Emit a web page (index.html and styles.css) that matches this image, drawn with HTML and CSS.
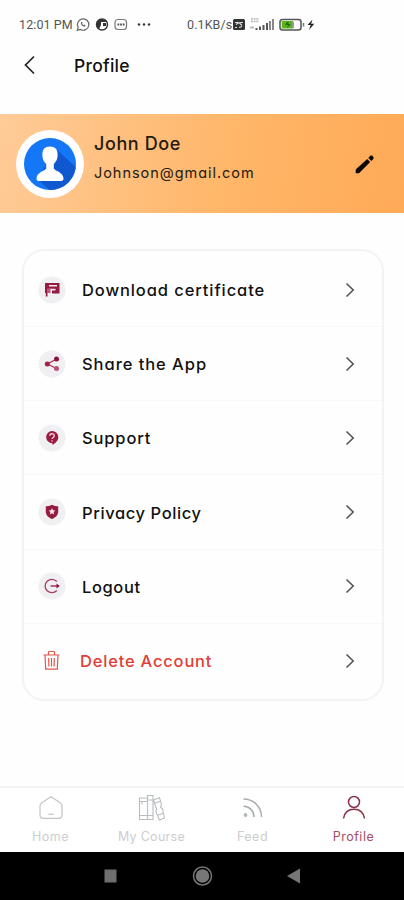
FILE: index.html
```
<!DOCTYPE html>
<html lang="en">
<head>
<meta charset="utf-8">
<title>Profile</title>
<link rel="stylesheet" href="styles.css">
</head>
<body>
<div class="screen">
  <div class="status">
    <span class="clock">12:01 PM</span>
    <svg class="status-left" width="78" height="16" viewBox="0 0 78 16" fill="none">
      <path d="M2.300 13.300l.9-3A5.700 5.700 0 1 1 5.400 12.500z" stroke="#666" stroke-width="1.200"/>
      <path d="M6 5.300c-.6 2.200 1.800 4.800 4.200 4.200l.4-1.200-1.500-.7-.7.6-1.300-1.400.5-.8-.6-1.200z" fill="#666"/>
      <circle cx="27" cy="7.500" r="5.500" stroke="#333" stroke-width="1.400"/>
      <path d="M27 2a5.500 5.500 0 0 0-3 10l2-4V5h5V3.500zM28 6h3v3h-3z" fill="#333"/>
      <rect x="40" y="2.500" width="11.500" height="10" rx="3" stroke="#777" stroke-width="1.200"/>
      <path d="M42.500 7.500h7" stroke="#555" stroke-width="1.800" stroke-dasharray="1.800 .8"/>
      <g fill="#333"><circle cx="64" cy="7.500" r="1.200"/><circle cx="69" cy="7.500" r="1.200"/><circle cx="74" cy="7.500" r="1.200"/></g>
    </svg>
    <span class="speed">0.1KB/s</span>
    <svg class="status-right" width="84" height="16" viewBox="0 0 84 16">
      <rect x="1" y="2" width="12" height="11" rx="1.500" fill="#333"/>
      <path d="M3 5.500h3M8 5.500h3M4 7.500l3-2 3 3M3 10.500h2M7 10.500l3-1" stroke="#ddd" stroke-width="1.100" fill="none"/>
      <path d="M19 2h8M19 4.500h8" stroke="#bbb" stroke-width="1.600" stroke-dasharray="2 .6"/>
      <path d="M18 10.500h4" stroke="#bbb" stroke-width="2"/>
      <path d="M24.500 13v-2M28 13V9.500M31.500 13V8M35 13V6" stroke="#555" stroke-width="2"/>
      <path d="M38 13V4M41 13V2" stroke="#888" stroke-width="2"/>
      <rect x="48" y="2.500" width="21" height="10.500" rx="2.500" fill="#fff" stroke="#555" stroke-width="1.500"/>
      <rect x="49.700" y="4" width="11.500" height="7.500" fill="#59b51e"/>
      <path d="M55 5l-2 3h3l-1 3 4-4h-3l1-2z" fill="#286e10"/>
      <path d="M61 5v6" stroke="#999" stroke-width="2"/>
      <path d="M71.500 6v3.500" stroke="#777" stroke-width="1.500"/>
      <path d="M80.500 2.500l-5 5.500h3.200l-1.700 5 5.300-6.200h-3.200z" fill="#222"/>
    </svg>
  </div>

  <header class="topbar">
    <svg class="back" width="14" height="20" viewBox="0 0 14 20" fill="none" stroke="#222" stroke-width="1.700"><path d="M11 1.500L2.500 10l8.500 8.500"/></svg>
    <h1>Profile</h1>
  </header>

  <section class="banner">
    <div class="avatar">
      <svg width="52" height="52" viewBox="0 0 52 52">
        <defs><clipPath id="disc"><circle cx="26" cy="26" r="26"/></clipPath></defs>
        <g clip-path="url(#disc)">
          <rect width="52" height="52" fill="#1477f8"/>
          <path d="M31 10L54 31v23H28L14 42z" fill="#1058d0"/>
        </g>
        <path d="M26 8.500c-5 0-7.800 2.700-7.600 8.500.1 5 2 7 3.800 9v4.500c-1 2.500-9 3.300-9.700 9.500-.2 2 .8 3 2.500 3h22c1.700 0 2.700-1 2.500-3-.7-6.200-8.700-7-9.700-9.500V26c1.800-2 3.700-4 3.800-9 .2-5.800-2.600-8.500-7.600-8.500z" fill="#fff"/>
      </svg>
    </div>
    <div class="who">
      <div class="name">John Doe</div>
      <div class="email">Johnson@gmail.com</div>
    </div>
    <svg class="edit" width="20" height="20" viewBox="0 0 20 20"><path d="M.7 19.300v-3.700L12.200 5l3 3L4 19.300zM13.300 3.900l1.800-1.900c1.500-1.400 4.700 1.300 3.200 3l-1.900 1.900z" fill="#0b0805"/></svg>
  </section>

  <nav class="card">
    <div class="row">
      <svg class="icon" viewBox="0 0 28 28"><circle cx="14" cy="14" r="13.500" fill="#f0eff1"/><path d="M7 7h14.500v10.500H14v-3h3.500v-1.800H11V17H9.500v3.500H7.800V17H7zM11 9v1.500h8V9z" fill="#96193f" fill-rule="evenodd"/><path d="M9 12.500h3.500v4.500H9z" fill="#bd5879"/></svg>
      <span class="label l-download">Download certificate</span>
      <svg class="chevron" viewBox="0 0 10 16"><path d="M1.500 1.500L8.200 8l-6.700 6.500"/></svg>
    </div>
    <div class="row">
      <svg class="icon" viewBox="0 0 28 28"><circle cx="14" cy="14" r="13.500" fill="#f0eff1"/><path d="M18.500 9L9.500 14l9 4.500" fill="none" stroke="#a73259" stroke-width="1.300"/><circle cx="18.500" cy="9" r="2.500" fill="#8d1439"/><circle cx="9.300" cy="14" r="2.500" fill="#a31e49"/><circle cx="18.500" cy="18.600" r="2.500" fill="#bd4f74"/></svg>
      <span class="label l-share">Share the App</span>
      <svg class="chevron" viewBox="0 0 10 16"><path d="M1.500 1.500L8.200 8l-6.700 6.500"/></svg>
    </div>
    <div class="row">
      <svg class="icon" viewBox="0 0 28 28"><circle cx="14" cy="14" r="13.500" fill="#f0eff1"/><path d="M14 7a6.300 6.300 0 0 1 6.300 6.300c0 3.700-3 6-5.800 7.700v-1.800A6 6 0 1 1 14 7z" fill="#9b1b42"/><path d="M11.800 11.700c.2-2.700 4.700-2.500 4.500.2-.1 1.600-2.200 1.500-2.200 3.100M14 16.200v1.400" fill="none" stroke="#f3d9e1" stroke-width="1.300"/></svg>
      <span class="label l-support">Support</span>
      <svg class="chevron" viewBox="0 0 10 16"><path d="M1.500 1.500L8.200 8l-6.700 6.500"/></svg>
    </div>
    <div class="row">
      <svg class="icon" viewBox="0 0 28 28"><circle cx="14" cy="14" r="13.500" fill="#f0eff1"/><path d="M14 6.800c2 1.100 4.100 1.500 6.200 1.500v5.200c0 3.700-3 6.200-6.200 7.500-3.200-1.300-6.200-3.800-6.200-7.500V8.300c2.100 0 4.200-.4 6.200-1.500z" fill="#96193f"/><path d="M14 10l1 2.300 2.500.2-1.900 1.600.6 2.400-2.200-1.300-2.200 1.300.6-2.400-1.900-1.600 2.500-.2z" fill="#f7e6eb"/></svg>
      <span class="label l-privacy">Privacy Policy</span>
      <svg class="chevron" viewBox="0 0 10 16"><path d="M1.500 1.500L8.200 8l-6.700 6.500"/></svg>
    </div>
    <div class="row">
      <svg class="icon" viewBox="0 0 28 28"><circle cx="14" cy="14" r="13.500" fill="#f0eff1"/><path d="M18.800 9.500a6.700 6.700 0 1 0 0 9" fill="none" stroke="#a63c61" stroke-width="1.300"/><path d="M12.500 14H20" stroke="#96193f" stroke-width="1.300"/><path d="M18.500 11.500L21.800 14l-3.300 2.500z" fill="#96193f"/></svg>
      <span class="label l-logout">Logout</span>
      <svg class="chevron" viewBox="0 0 10 16"><path d="M1.500 1.500L8.200 8l-6.700 6.500"/></svg>
    </div>
    <div class="row danger">
      <svg class="icon" viewBox="0 0 28 28" fill="none" stroke="#e0594d" stroke-width="1.200"><path d="M5.500 8h16M10.500 8V5.200c0-.5.300-.7.700-.7h4.600c.4 0 .7.200.7.700V8M7 8l.7 14.200h11.600L20 8M10.700 11l.2 8.500M13.500 11v8.500M16.300 11l-.2 8.500"/></svg>
      <span class="label l-delete">Delete Account</span>
      <svg class="chevron" viewBox="0 0 10 16"><path d="M1.500 1.500L8.200 8l-6.700 6.500"/></svg>
    </div>
  </nav>

  <footer class="tabs">
    <div class="tab">
      <svg width="28" height="28" viewBox="0 0 28 28" fill="none" stroke="#bfc5c8" stroke-width="1.200"><path d="M14 2.700L4.500 9c-1 .7-1.500 1.700-1.500 3v9c0 2 1.300 3.300 3.300 3.300h15.400c2 0 3.300-1.300 3.300-3.300v-9c0-1.300-.5-2.300-1.500-3z"/><path d="M11 20c2 .5 4 .5 6 0"/></svg>
      <span class="t-home">Home</span>
    </div>
    <div class="tab">
      <svg width="28" height="28" viewBox="0 0 28 28" fill="none" stroke="#b7bdc0" stroke-width="1.100"><path d="M1.500 4h8v21.500h-8zM9.500 1.500H15v24H9.500zM1.500 7.500h8M1.500 21.500H15M9.500 6H15M15.500 6l6-2.300 2 7-1 2.300 2 2 2 9-5 2-3.500-8 .5-3z M17 9l5.500-1.800M20 21l5.500-1.800M4 7.500v3"/></svg>
      <span class="t-course">My Course</span>
    </div>
    <div class="tab">
      <svg width="28" height="28" viewBox="0 0 28 28" fill="none" stroke="#a8adb0" stroke-width="1.500"><circle cx="6.500" cy="21" r="1.900" fill="#b4b9bb" stroke="none"/><path d="M4.500 12.300c6 0 10.500 4.600 10.500 10.700M4.500 5c10.200 0 18 7.800 18 18"/></svg>
      <span class="t-feed">Feed</span>
    </div>
    <div class="tab active">
      <svg width="28" height="28" viewBox="0 0 28 28" fill="none" stroke="#873047" stroke-width="1.500"><circle cx="14" cy="8" r="5.500"/><path d="M3.500 24.500c1-6 5-9.200 10.500-9.200s9.500 3.200 10.500 9.200"/></svg>
      <span class="t-profile">Profile</span>
    </div>
  </footer>

  <div class="sysnav">
    <svg width="404" height="48" viewBox="0 0 404 48">
      <rect x="104.500" y="17.500" width="12" height="13" fill="#6f6f6f"/>
      <circle cx="202.500" cy="24" r="9" fill="none" stroke="#777" stroke-width="1.500"/>
      <circle cx="202.500" cy="24" r="6.800" fill="#777"/>
      <path d="M287 24l13-7.500v15z" fill="#777"/>
    </svg>
  </div>
</div>
</body>
</html>
```
FILE: styles.css
```
* { box-sizing: border-box; }
body { margin: 0; background: #fff; font-family: Inter, "Open Sans", sans-serif; font-feature-settings: "cv11"; color: #111; }
svg { display: block; flex: none; }
.screen { width: 404px; height: 900px; display: flex; flex-direction: column; background: #fefefe; overflow: hidden; white-space: nowrap; }
.status { height: 40px; display: flex; align-items: center; padding: 9px 0 0 19px; font-family: Roboto, sans-serif; font-size: 12.500px; line-height: 16px; color: #555; }
.clock { width: 56px; letter-spacing: .1px; }
.status-left { margin-right: 34px; }
.speed { width: 45px; letter-spacing: .1px; }
.topbar { height: 74px; display: flex; align-items: flex-start; padding: 15px 0 0 23px; }
h1 { margin: 0 0 0 37px; font-size: 17.500px; font-weight: 500; line-height: 22px; letter-spacing: .25px; }
.banner { height: 99px; display: flex; align-items: center; padding: 0 29px 0 16px; background: linear-gradient(100deg, #ffcb98 0%, #ffb668 58%, #ffaa57 100%); }
.avatar { width: 68px; height: 68px; border-radius: 50%; background: #fff; display: grid; place-items: center; }
.who { margin: 0 0 12px 10px; flex: 1; color: #241a10; }
.name { font-size: 18px; line-height: 24px; font-weight: 500; letter-spacing: .6px; }
.email { font-size: 14.500px; line-height: 20px; margin-top: 7px; letter-spacing: .95px; }
.card { width: 362px; height: 452px; margin: 36px 0 0 22px; border: 2px solid #f3f3f3; border-radius: 22px; padding: 2px 0 1px; display: grid; grid-template-rows: repeat(6, 1fr); }
.row { display: flex; align-items: center; padding: 0 27px 0 14px; border-bottom: 1px solid #f8f8f8; }
.row:last-child { border-bottom: 0; }
.icon { width: 28px; height: 28px; }
.label { flex: 1; margin-left: 16px; padding-top: 1px; font-size: 16.500px; font-weight: 500; line-height: 24px; }
.danger .label { color: #df4036; margin-left: 14px; padding-top: 0; }
.chevron { width: 10px; height: 16px; fill: none; stroke: #555; stroke-width: 1.600; }
.l-download { letter-spacing: .9px; }
.l-share { letter-spacing: .95px; }
.l-support { letter-spacing: .85px; }
.l-privacy { letter-spacing: .6px; }
.l-logout { letter-spacing: .6px; }
.l-delete { letter-spacing: .8px; }
.tabs { height: 66px; margin-top: auto; display: grid; grid-template-columns: repeat(4, 1fr); background: #fff; border-top: 2px solid #f2f2f2; }
.tab { display: flex; flex-direction: column; align-items: center; padding-top: 6px; color: #cbced0; font-size: 12.500px; line-height: 18px; }
.tab span { margin-top: 6px; letter-spacing: .5px; }
.tab .t-course { letter-spacing: .3px; }
.active { color: #a44d64; }
.sysnav { height: 48px; background: #000; }
```
